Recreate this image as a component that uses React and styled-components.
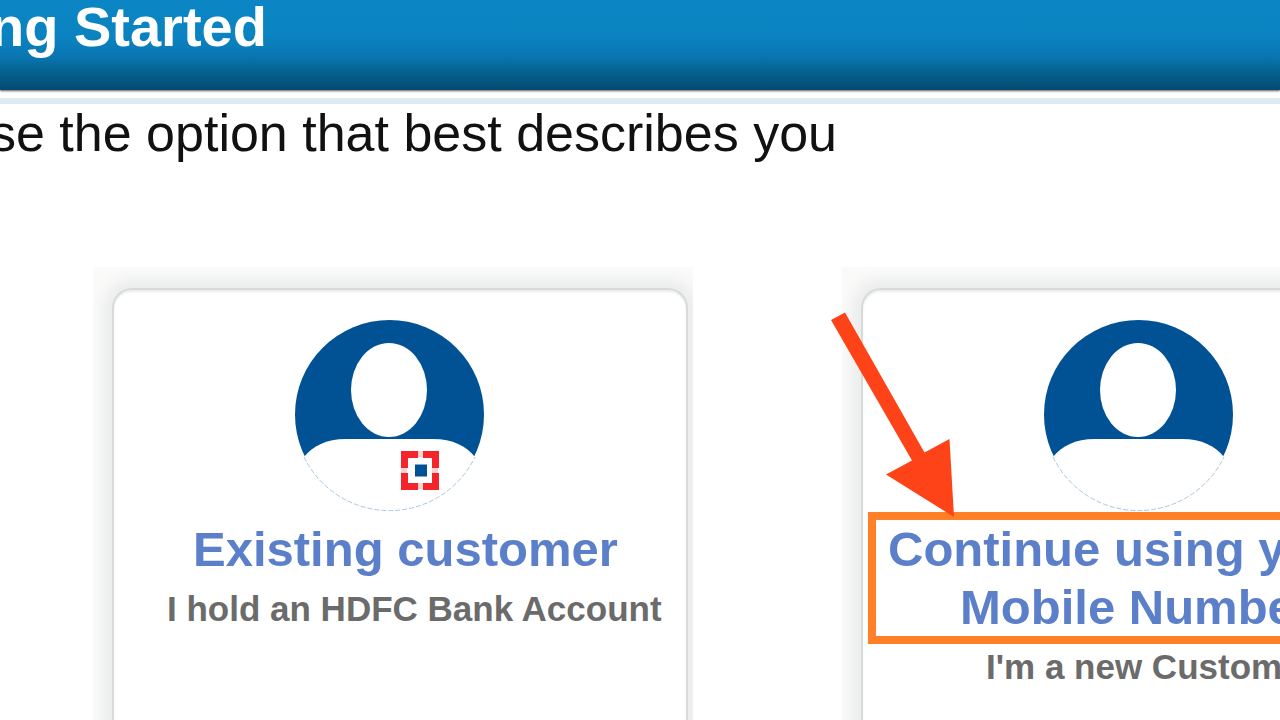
import React from "react";
import styled, { createGlobalStyle } from "styled-components";

const GlobalStyle = createGlobalStyle`
  * { box-sizing: border-box; }
  body {
    margin: 0;
    background: #fff;
    font-family: "Liberation Sans", Arial, sans-serif;
    overflow: hidden;
  }
`;

const Page = styled.div`
  display: flex;
  flex-direction: column;
  min-height: 100vh;
  overflow: hidden;
`;

const Header = styled.header`
  height: 90px;
  background: linear-gradient(#0b85c4 0%, #0b83c1 40%, #0977b2 62%, #06618f 80%, #024a70 100%);
  box-shadow: 0 1px 2px rgba(60, 50, 50, 0.8);
`;

const HeaderTitle = styled.h1`
  margin: 0 0 0 -10px;
  font-size: 56px;
  line-height: 54px;
  font-weight: 700;
  color: #fff;
  white-space: nowrap;
`;

const Main = styled.main`
  flex: 1;
  display: flex;
  flex-direction: column;
  margin-top: 8px;
  border-top: 6px solid #deebf1;
`;

const Prompt = styled.p`
  margin: 0 0 0 -10px;
  font-size: 52px;
  line-height: 58px;
  color: #111;
  white-space: nowrap;
`;

const Options = styled.div`
  flex: 1;
  display: flex;
  gap: 149px;
  margin-top: 105px;
  padding-left: 93px;
`;

const Option = styled.section`
  position: relative;
  display: flex;
  flex: 0 0 600px;
`;

const Frame = styled.div`
  flex: 1;
  display: flex;
  padding: 21px 5px 0 19px;
  background: #fafaf9;
  overflow: hidden;
`;

const Panel = styled.div`
  flex: 1;
  padding: 30px 0 0 5px;
  border: 2px solid #d8dada;
  border-bottom: 0;
  border-radius: 20px 20px 0 0;
  background: #fff;
  box-shadow: 0 0 12px 10px #eceeed, inset 0 2px 2px #eceeee;
`;

const AvatarRow = styled.div`
  height: 192px;
  padding-left: 176px;
`;

const TitleLink = styled.a`
  display: block;
  border: 8px solid ${(p) => (p.$highlight ? "#ff8026" : "transparent")};
  font-size: 49px;
  line-height: 58px;
  font-weight: 700;
  color: #5b7fc9;
  text-decoration: none;
  white-space: nowrap;
`;

const Line = styled.span`
  display: block;
  padding-left: ${(p) => p.$inset}px;
`;

const Note = styled.p`
  margin: 0;
  padding-left: ${(p) => p.$inset}px;
  font-size: 35px;
  line-height: 46px;
  font-weight: 700;
  color: #6b6b6b;
  white-space: nowrap;
`;

const ArrowSvg = styled.svg`
  position: absolute;
  left: -16px;
  top: 40px;
`;

function Avatar({ bank }) {
  return (
    <svg width="190" height="191" viewBox="0 0 190 191" aria-hidden="true">
      <circle cx="94.5" cy="94.500" r="94.5" fill="#005294" />
      <ellipse cx="94" cy="70" rx="38" ry="47" fill="#fff" />
      <path
        d="M9 137 C18 126 31 119 51 119 H138 C158 119 171 126 180 137 A94.5 94.5 0 0 1 9 137 Z"
        fill="#fff"
      />
      <path
        d="M9 137 A95 95 0 0 0 180 137"
        fill="none"
        stroke="#a9c6df"
        strokeWidth="1"
        strokeDasharray="5 2"
      />
      {bank && (
        <g>
          <rect x="109" y="134" width="31" height="32" fill="none" stroke="#fbd0d0" strokeWidth="6" />
          <path
            d="M123 134.500H109.500V148M128 134.500H140.500V148M123 166.500H109.500V153M128 166.500H140.500V153"
            fill="none"
            stroke="#f4242b"
            strokeWidth="7"
          />
          <rect x="120" y="144.500" width="12" height="12" fill="#005294" />
        </g>
      )}
    </svg>
  );
}

function Arrow() {
  return (
    <ArrowSvg width="136" height="220" viewBox="826 307 136 220" aria-hidden="true">
      <polygon
        points="831,320 845,312.500 924.500,452.500 949.500,439 954,517 886,474.500 912,460.500"
        fill="#ff4318"
      />
    </ArrowSvg>
  );
}

const options = [
  {
    bank: true,
    lines: [{ text: "Existing customer", inset: 66 }],
    note: "I hold an HDFC Bank Account",
    noteInset: 48,
  },
  {
    highlight: true,
    lines: [
      { text: "Continue using your", inset: 12 },
      { text: "Mobile Number", inset: 84 },
    ],
    note: "I'm a new Customer",
    noteInset: 118,
  },
];

export default function App() {
  return (
    <Page>
      <GlobalStyle />
      <Header>
        <HeaderTitle>ng Started</HeaderTitle>
      </Header>
      <Main>
        <Prompt>se the option that best describes you</Prompt>
        <Options>
          {options.map((o) => (
            <Option key={o.note}>
              <Frame>
                <Panel>
                  <AvatarRow>
                    <Avatar bank={o.bank} />
                  </AvatarRow>
                  <TitleLink href="#" $highlight={o.highlight}>
                    {o.lines.map((l) => (
                      <Line key={l.text} $inset={l.inset}>
                        {l.text}
                      </Line>
                    ))}
                  </TitleLink>
                  <Note $inset={o.noteInset}>{o.note}</Note>
                </Panel>
              </Frame>
              {o.highlight && <Arrow />}
            </Option>
          ))}
        </Options>
      </Main>
    </Page>
  );
}
